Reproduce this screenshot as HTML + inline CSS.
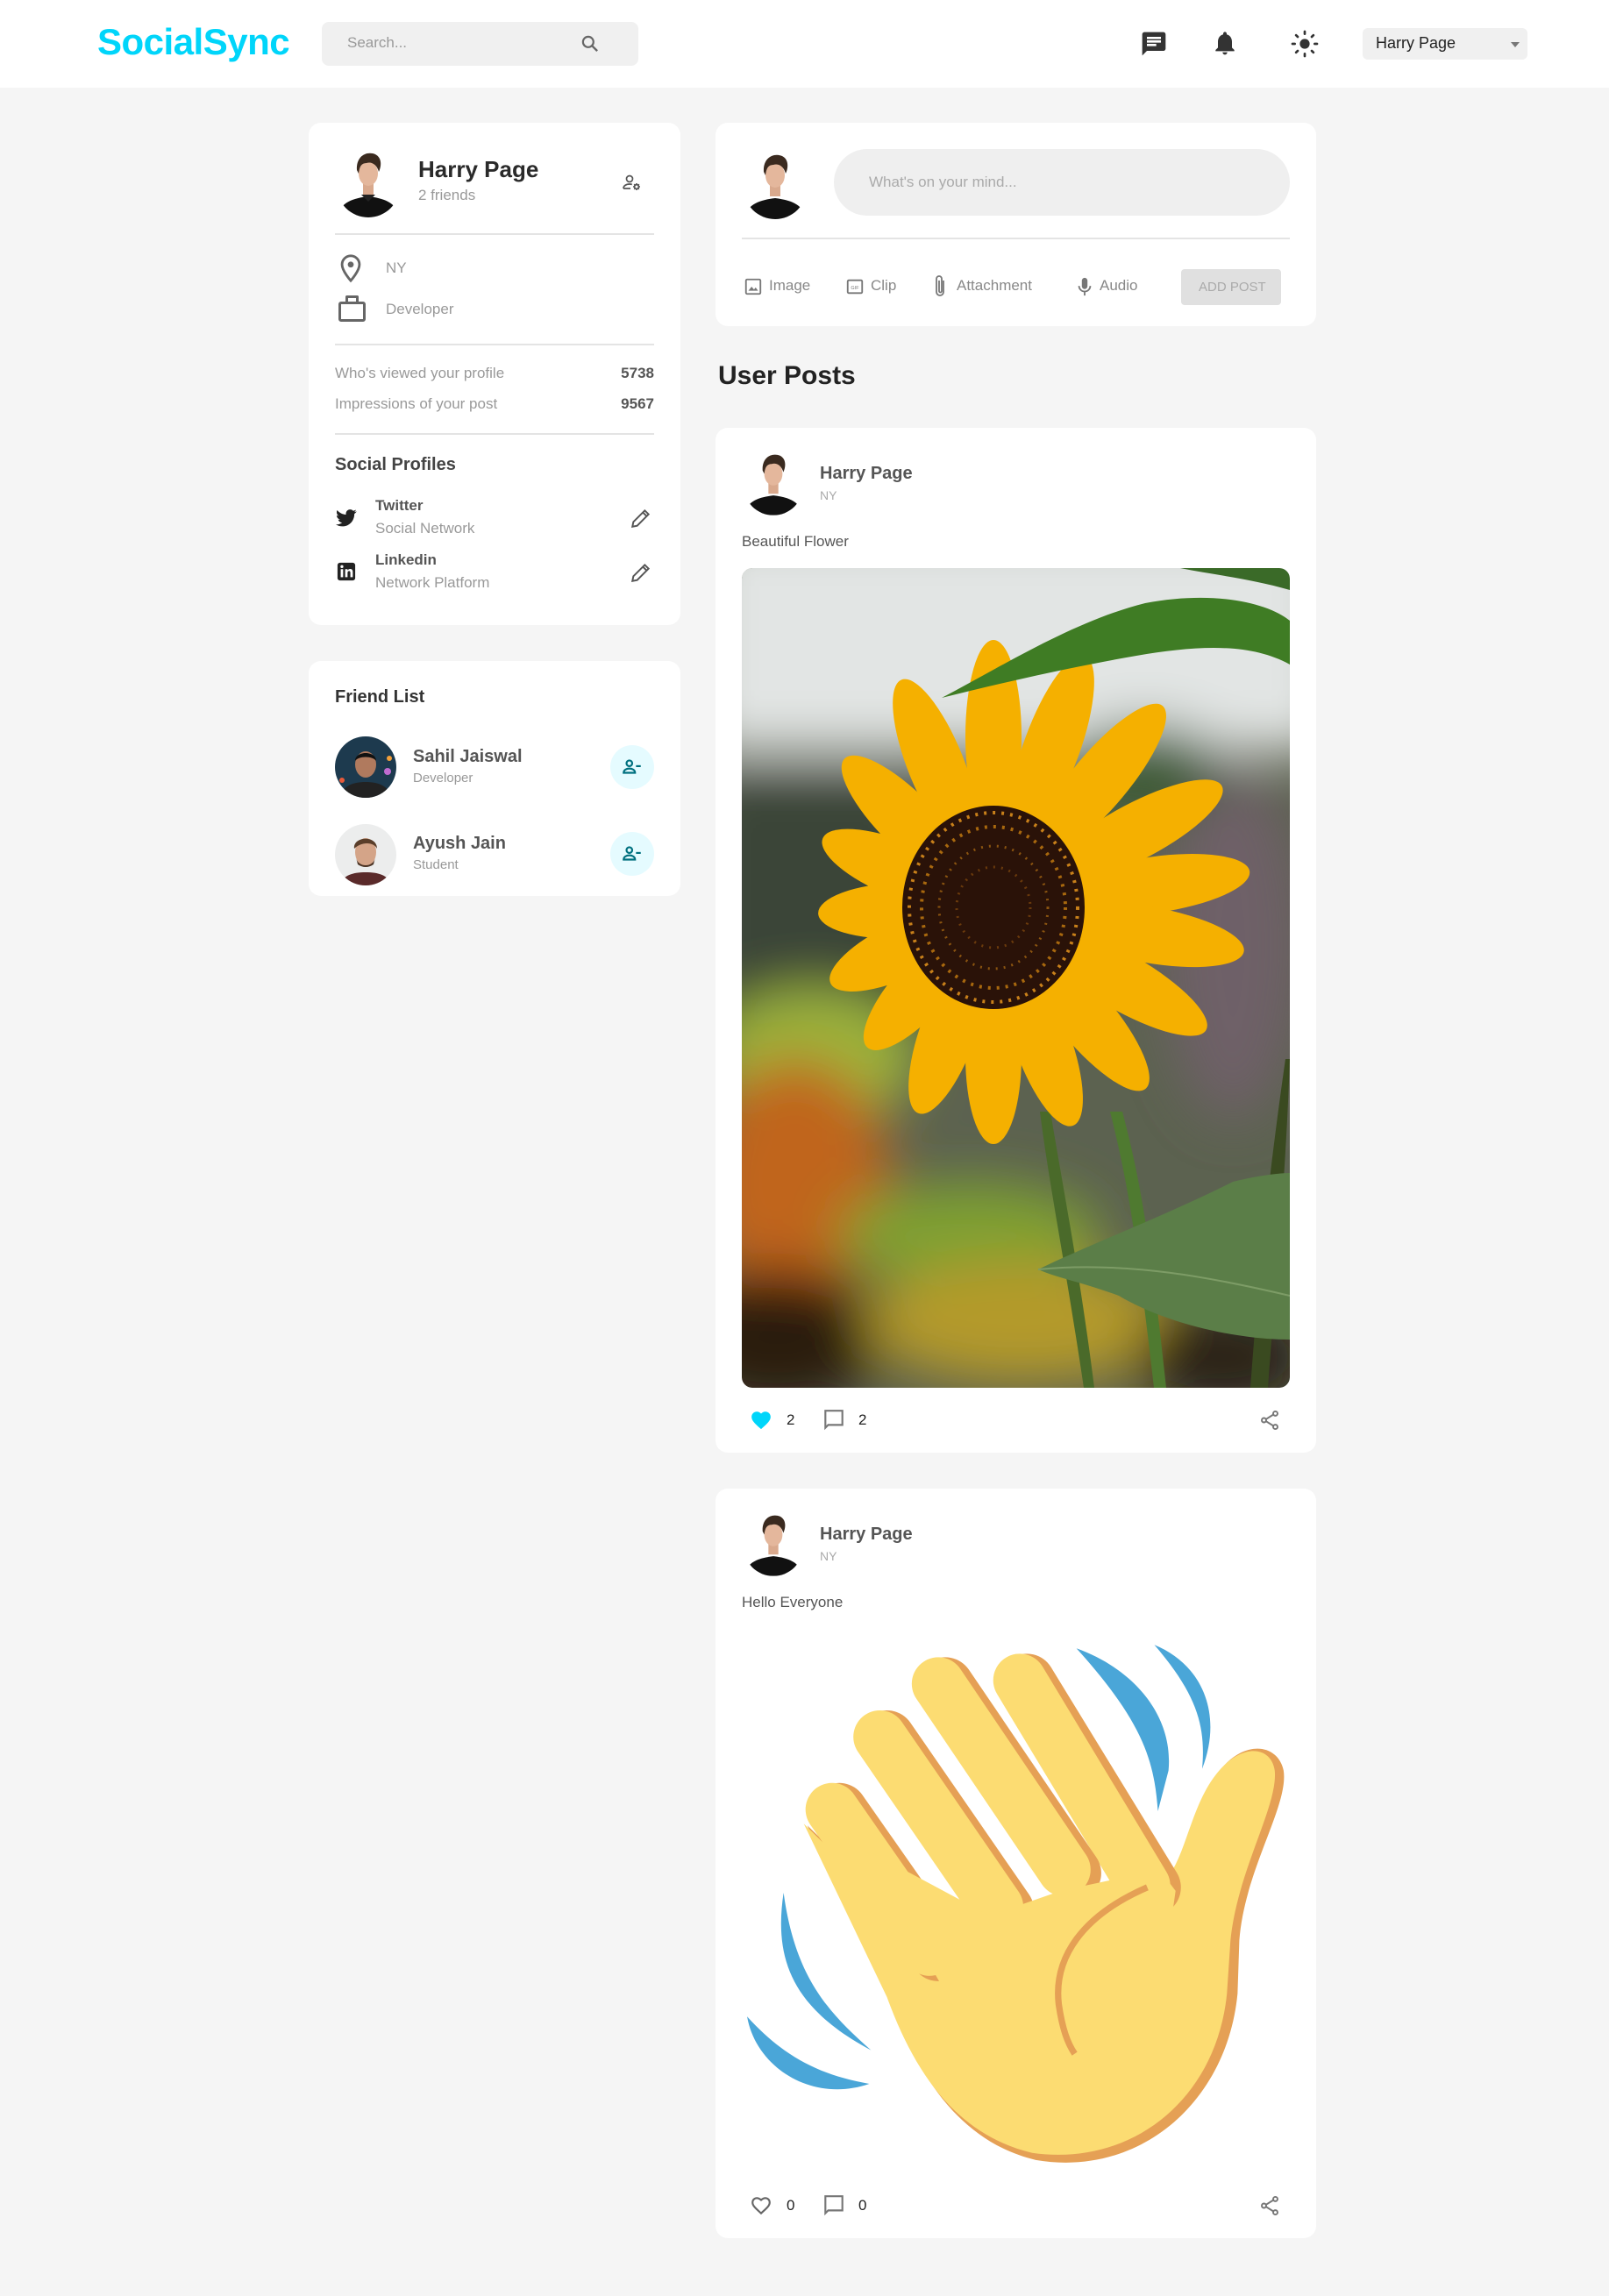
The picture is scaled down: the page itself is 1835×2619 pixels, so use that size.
<!DOCTYPE html>
<html><head><meta charset="utf-8">
<style>
*{margin:0;padding:0;box-sizing:border-box}
body{width:1835px;height:2619px;background:#f5f5f5;font-family:"Liberation Sans",sans-serif;position:relative;overflow:hidden;color:#333}
.a{position:absolute}
.card{position:absolute;background:#fff;border-radius:14px}
.t{position:absolute;white-space:nowrap}
.hr{position:absolute;height:2px;background:#e4e4e4}
</style></head><body>
<div class="a" style="left:0;top:0;width:1835px;height:100px;background:#fff"></div>
<div class="t" style="left:111px;top:24px;font-size:42px;font-weight:bold;color:#00d5fa;letter-spacing:-0.5px">SocialSync</div>
<div class="a" style="left:367px;top:25px;width:361px;height:50px;background:#f0f0f0;border-radius:8px"></div>
<div class="t" style="left:396px;top:39px;font-size:17px;color:#999">Search...</div>
<svg class="a" style="left:660px;top:37px" width="26" height="26" viewBox="0 0 24 24"><circle cx="10" cy="10" r="5.5" fill="none" stroke="#666" stroke-width="2"/><path d="M14 14l5.5 5.5" stroke="#666" stroke-width="2.2"/></svg>
<svg class="a" style="left:1300px;top:34px" width="32" height="32" viewBox="0 0 24 24"><path d="M20 2H4c-1.1 0-2 .9-2 2v18l4-4h14c1.1 0 2-.9 2-2V4c0-1.1-.9-2-2-2zM6 9h12v2H6zm8 5H6v-2h8zm4-6H6V6h12z" fill="#333"/></svg>
<svg class="a" style="left:1381px;top:33px" width="32" height="32" viewBox="0 0 24 24"><path d="M12 22c1.1 0 2-.9 2-2h-4c0 1.1.9 2 2 2zm6-6v-5c0-3.07-1.63-5.64-4.5-6.32V4c0-.83-.67-1.5-1.5-1.5s-1.5.67-1.5 1.5v.68C7.64 5.36 6 7.920 6 11v5l-2 2v1h16v-1z" fill="#333"/></svg>
<svg class="a" style="left:1472px;top:34px" width="32" height="32" viewBox="0 0 24 24"><circle cx="12" cy="12" r="4.2" fill="#333"/><g stroke="#333" stroke-width="2" stroke-linecap="round"><path d="M12 1.5v2M12 20.5v2M1.5 12h2M20.5 12h2M4.6 4.6l1.4 1.4M18 18l1.4 1.4M4.6 19.4L6 18M18 6l1.4-1.4"/></g></svg>
<div class="a" style="left:1554px;top:32px;width:188px;height:36px;background:#f0f0f0;border-radius:6px"></div>
<div class="t" style="left:1569px;top:39px;font-size:18px;color:#222">Harry Page</div>
<div class="a" style="left:1723px;top:48px;border:5px solid transparent;border-top:6px solid #777"></div>

<!-- profile card -->
<div class="card" style="left:352px;top:140px;width:424px;height:573px"></div>
<svg class="a" style="left:384px;top:168px" width="72" height="80" viewBox="0 0 72 80"><defs><clipPath id="c1"><circle cx="36" cy="44" r="36"/></clipPath></defs><g clip-path="url(#c1)"><path d="M0 80 C4 62 20 58 36 56 C52 58 68 62 72 80Z" fill="#111"/></g><rect x="30" y="40" width="12" height="14" fill="#d9a98d"/><ellipse cx="36" cy="30" rx="11" ry="14" fill="#e4b79c"/><path d="M23 26 C22 10 34 4 44 8 C52 12 51 22 48 28 C46 20 40 16 34 18 C28 18 26 22 25 30Z" fill="#3a2a1f"/><path d="M28 54 L36 62 L44 54" fill="#222"/></svg>
<div class="t" style="left:477px;top:178px;font-size:26px;font-weight:bold;color:#2a2a2a">Harry Page</div>
<div class="t" style="left:477px;top:213px;font-size:17px;color:#999">2 friends</div>
<svg class="a" style="left:709px;top:197px" width="24" height="24" viewBox="0 0 24 24"><circle cx="9" cy="7" r="3.5" fill="none" stroke="#555" stroke-width="1.7"/><path d="M2 18c0-3 3-5 7-5 1 0 2 .1 2.8.4M2 18h8" fill="none" stroke="#555" stroke-width="1.7"/><circle cx="17" cy="16" r="2.4" fill="none" stroke="#555" stroke-width="1.7"/><g stroke="#555" stroke-width="1.6"><path d="M17 12v1.3M17 18.7V20M13 16h1.3M19.7 16H21M14.2 13.2l1 1M18.8 17.8l1 1M14.2 18.8l1-1M18.8 14.2l1-1"/></g></svg>
<div class="hr" style="left:382px;top:266px;width:364px"></div>
<svg class="a" style="left:383px;top:289px" width="34" height="34" viewBox="0 0 24 24"><path d="M12 2C8.1 2 5 5.1 5 9c0 5.2 7 13 7 13s7-7.8 7-13c0-3.9-3.1-7-7-7z" fill="none" stroke="#666" stroke-width="2"/><circle cx="12" cy="9" r="2.4" fill="#666"/></svg>
<div class="t" style="left:440px;top:296px;font-size:17px;color:#999">NY</div>
<div class="a" style="left:386px;top:344px;width:31px;height:23px;border:3px solid #666;border-radius:3px"></div>
<div class="a" style="left:394px;top:337px;width:15px;height:9px;border:3px solid #666;border-bottom:none;border-radius:2px 2px 0 0"></div>
<div class="t" style="left:440px;top:343px;font-size:17px;color:#999">Developer</div>
<div class="hr" style="left:382px;top:392px;width:364px"></div>
<div class="t" style="left:382px;top:416px;font-size:17px;color:#999">Who's viewed your profile</div>
<div class="t" style="left:646px;width:100px;text-align:right;top:416px;font-size:17px;font-weight:bold;color:#555">5738</div>
<div class="t" style="left:382px;top:451px;font-size:17px;color:#999">Impressions of your post</div>
<div class="t" style="left:646px;width:100px;text-align:right;top:451px;font-size:17px;font-weight:bold;color:#555">9567</div>
<div class="hr" style="left:382px;top:494px;width:364px"></div>
<div class="t" style="left:382px;top:519px;font-size:20px;font-weight:bold;color:#444">Social Profiles</div>
<svg class="a" style="left:383px;top:580px" width="24" height="22" viewBox="0 0 24 20"><path d="M23.6 2.4c-.9.4-1.8.6-2.8.8 1-.6 1.8-1.500 2.100-2.700-.9.6-2 1-3.1 1.2C18.9.7 17.6.1 16.3.1c-2.7 0-4.8 2.2-4.8 4.8 0 .4 0 .8.1 1.1C7.5 5.8 4 3.9 1.6 1 1.2 1.7 1 2.6 1 3.4c0 1.7.9 3.2 2.2 4-.8 0-1.5-.2-2.2-.6v.1c0 2.3 1.7 4.3 3.9 4.7-.4.1-.8.2-1.3.2-.3 0-.6 0-.9-.1.6 1.9 2.4 3.3 4.5 3.4-1.7 1.3-3.7 2.1-6 2.1H0c2.1 1.4 4.7 2.2 7.4 2.2 8.9 0 13.7-7.4 13.7-13.7v-.6c1-.7 1.8-1.5 2.5-2.5z" fill="#222"/></svg>
<div class="t" style="left:428px;top:567px;font-size:17px;font-weight:bold;color:#555">Twitter</div>
<div class="t" style="left:428px;top:593px;font-size:17px;color:#999">Social Network</div>
<svg class="a" style="left:718px;top:578px" width="26" height="26" viewBox="0 0 24 24"><path d="M3 21l1-5L16 4l4 4L8 20zM14 6l4 4" fill="none" stroke="#555" stroke-width="1.8"/></svg>
<svg class="a" style="left:384px;top:641px" width="22" height="22" viewBox="0 0 24 24"><rect x="1" y="1" width="22" height="22" rx="3" fill="#222"/><rect x="5" y="9" width="3" height="10" fill="#fff"/><circle cx="6.5" cy="5.8" r="1.8" fill="#fff"/><path d="M10.5 9h3v1.5c.6-1 1.8-1.8 3.3-1.8 2.5 0 3.2 1.7 3.2 4V19h-3v-5.5c0-1.2-.3-2.2-1.6-2.2-1.4 0-1.9 1-1.9 2.3V19h-3z" fill="#fff"/></svg>
<div class="t" style="left:428px;top:629px;font-size:17px;font-weight:bold;color:#555">Linkedin</div>
<div class="t" style="left:428px;top:655px;font-size:17px;color:#999">Network Platform</div>
<svg class="a" style="left:718px;top:640px" width="26" height="26" viewBox="0 0 24 24"><path d="M3 21l1-5L16 4l4 4L8 20zM14 6l4 4" fill="none" stroke="#555" stroke-width="1.8"/></svg>

<!-- friend list -->
<div class="card" style="left:352px;top:754px;width:424px;height:268px"></div>
<div class="t" style="left:382px;top:784px;font-size:20px;font-weight:bold;color:#333">Friend List</div>
<svg class="a" style="left:382px;top:840px" width="70" height="70" viewBox="0 0 70 70"><defs><clipPath id="f1"><circle cx="35" cy="35" r="35"/></clipPath></defs><g clip-path="url(#f1)"><rect width="70" height="70" fill="#1d3a4e"/><circle cx="60" cy="40" r="4" fill="#c06bd0"/><circle cx="8" cy="50" r="3" fill="#e85a3a"/><circle cx="62" cy="25" r="3" fill="#f3a03a"/><path d="M5 70c4-14 16-18 30-18s26 4 30 18z" fill="#222"/><ellipse cx="35" cy="32" rx="12" ry="15" fill="#b07a5e"/><path d="M23 28c0-12 24-12 24 0-4-6-20-6-24 0z" fill="#111"/></g></svg>
<div class="t" style="left:471px;top:852px;font-size:20px;font-weight:bold;color:#555">Sahil Jaiswal</div>
<div class="t" style="left:471px;top:879px;font-size:15px;color:#999">Developer</div>
<div class="a" style="left:696px;top:850px;width:50px;height:50px;border-radius:50%;background:#e5fbff"></div>
<svg class="a" style="left:708px;top:862px" width="26" height="26" viewBox="0 0 24 24"><circle cx="9" cy="8" r="3" fill="none" stroke="#00707f" stroke-width="2"/><path d="M3 18c0-3 3-4.5 6-4.5s6 1.5 6 4.5z" fill="none" stroke="#00707f" stroke-width="2"/><path d="M16 11h5" stroke="#00707f" stroke-width="2"/></svg>
<svg class="a" style="left:382px;top:940px" width="70" height="70" viewBox="0 0 70 70"><defs><clipPath id="f2"><circle cx="35" cy="35" r="35"/></clipPath></defs><g clip-path="url(#f2)"><rect width="70" height="70" fill="#eceded"/><path d="M5 70c4-12 16-15 30-15s26 3 30 15z" fill="#5a2a2a"/><ellipse cx="35" cy="32" rx="12" ry="16" fill="#d4a488"/><path d="M24 38c2 12 20 12 22 0l-2 8c-6 4-12 4-18 0z" fill="#4a3324"/><path d="M22 28c-2-14 26-16 26 0-4-8-18-8-26 0z" fill="#5a3e2a"/></g></svg>
<div class="t" style="left:471px;top:951px;font-size:20px;font-weight:bold;color:#555">Ayush Jain</div>
<div class="t" style="left:471px;top:978px;font-size:15px;color:#999">Student</div>
<div class="a" style="left:696px;top:949px;width:50px;height:50px;border-radius:50%;background:#e5fbff"></div>
<svg class="a" style="left:708px;top:961px" width="26" height="26" viewBox="0 0 24 24"><circle cx="9" cy="8" r="3" fill="none" stroke="#00707f" stroke-width="2"/><path d="M3 18c0-3 3-4.5 6-4.5s6 1.5 6 4.5z" fill="none" stroke="#00707f" stroke-width="2"/><path d="M16 11h5" stroke="#00707f" stroke-width="2"/></svg>

<!-- create post -->
<div class="card" style="left:816px;top:140px;width:685px;height:232px"></div>
<svg class="a" style="left:848px;top:170px" width="72" height="80" viewBox="0 0 72 80"><defs><clipPath id="c2"><circle cx="36" cy="44" r="36"/></clipPath></defs><g clip-path="url(#c2)"><path d="M0 80 C4 62 20 58 36 56 C52 58 68 62 72 80Z" fill="#111"/></g><rect x="30" y="40" width="12" height="14" fill="#d9a98d"/><ellipse cx="36" cy="30" rx="11" ry="14" fill="#e4b79c"/><path d="M23 26 C22 10 34 4 44 8 C52 12 51 22 48 28 C46 20 40 16 34 18 C28 18 26 22 25 30Z" fill="#3a2a1f"/></svg>
<div class="a" style="left:951px;top:170px;width:520px;height:76px;background:#efefef;border-radius:38px"></div>
<div class="t" style="left:991px;top:198px;font-size:17px;color:#aaa">What's on your mind...</div>
<div class="hr" style="left:846px;top:271px;width:625px"></div>
<svg class="a" style="left:848px;top:316px" width="22" height="22" viewBox="0 0 24 24"><rect x="3" y="3" width="18" height="18" rx="1.5" fill="none" stroke="#777" stroke-width="2"/><path d="M6 17l4-5 3 3.5 2-2.5 3 4z" fill="#777"/></svg>
<div class="t" style="left:877px;top:316px;font-size:17px;color:#888">Image</div>
<svg class="a" style="left:964px;top:316px" width="22" height="22" viewBox="0 0 24 24"><rect x="3" y="4" width="18" height="16" rx="1.5" fill="none" stroke="#777" stroke-width="2"/><text x="12" y="15" font-size="6" text-anchor="middle" fill="#777" font-family="Liberation Sans">GIF</text></svg>
<div class="t" style="left:993px;top:316px;font-size:17px;color:#888">Clip</div>
<svg class="a" style="left:1062px;top:313px" width="20" height="28" viewBox="0 0 20 28"><path d="M14 7v13a4 4 0 0 1-8 0V5a3 3 0 0 1 6 0v14a1.5 1.5 0 0 1-3 0V7" fill="none" stroke="#777" stroke-width="1.8"/></svg>
<div class="t" style="left:1091px;top:316px;font-size:17px;color:#888">Attachment</div>
<svg class="a" style="left:1226px;top:314px" width="22" height="26" viewBox="0 0 24 26"><rect x="8.5" y="2" width="7" height="14" rx="3.5" fill="#777"/><path d="M5 12a7 7 0 0 0 14 0M12 19v5" fill="none" stroke="#777" stroke-width="2"/></svg>
<div class="t" style="left:1254px;top:316px;font-size:17px;color:#888">Audio</div>
<div class="a" style="left:1347px;top:307px;width:114px;height:41px;background:#e0e0e0;border-radius:4px"></div>
<div class="t" style="left:1367px;top:319px;font-size:15px;color:#aaa">ADD POST</div>

<div class="t" style="left:819px;top:412px;font-size:30px;font-weight:bold;color:#222">User Posts</div>

<!-- post 1 -->
<div class="card" style="left:816px;top:488px;width:685px;height:1169px"></div>
<svg class="a" style="left:848px;top:512px" width="68" height="76" viewBox="0 0 72 80"><defs><clipPath id="c3"><circle cx="36" cy="44" r="36"/></clipPath></defs><g clip-path="url(#c3)"><path d="M0 80 C4 62 20 58 36 56 C52 58 68 62 72 80Z" fill="#111"/></g><rect x="30" y="40" width="12" height="14" fill="#d9a98d"/><ellipse cx="36" cy="30" rx="11" ry="14" fill="#e4b79c"/><path d="M23 26 C22 10 34 4 44 8 C52 12 51 22 48 28 C46 20 40 16 34 18 C28 18 26 22 25 30Z" fill="#3a2a1f"/></svg>
<div class="t" style="left:935px;top:529px;font-size:20px;font-weight:bold;color:#555">Harry Page</div>
<div class="t" style="left:935px;top:557px;font-size:14px;color:#aaa">NY</div>
<div class="t" style="left:846px;top:608px;font-size:17px;color:#555">Beautiful Flower</div>
<svg class="a" style="left:846px;top:648px;border-radius:12px" width="625" height="935" viewBox="0 0 625 935">
<defs><filter id="bl" x="-50%" y="-50%" width="200%" height="200%"><feGaussianBlur stdDeviation="30"/></filter><clipPath id="rc"><rect width="625" height="935" rx="12"/></clipPath></defs>
<g clip-path="url(#rc)">
<rect width="625" height="935" fill="#5c6250"/>
<g filter="url(#bl)">
<rect x="-50" y="-50" width="725" height="260" fill="#e2e5e4"/>
<rect x="-50" y="230" width="260" height="300" fill="#3a4438"/>
<ellipse cx="80" cy="560" rx="120" ry="80" fill="#9cb43a"/>
<ellipse cx="60" cy="700" rx="110" ry="140" fill="#c0651a"/>
<ellipse cx="40" cy="880" rx="120" ry="80" fill="#2a1a10"/>
<ellipse cx="260" cy="760" rx="150" ry="60" fill="#7ea032"/>
<ellipse cx="320" cy="860" rx="180" ry="70" fill="#b49a2a"/>
<ellipse cx="560" cy="430" rx="80" ry="200" fill="#6e6068"/>
<ellipse cx="460" cy="230" rx="90" ry="50" fill="#3a5a30"/>
<ellipse cx="550" cy="900" rx="100" ry="60" fill="#2a2418"/>
</g>
<path d="M340 620 C350 700 370 800 390 935 L402 935 C385 800 365 700 352 620Z" fill="#4a6a2a"/>
<path d="M420 620 C440 700 450 760 470 935 L484 935 C465 760 455 700 434 620Z" fill="#4f7a30"/>
<path d="M620 560 C600 700 590 800 580 935 L600 935 C610 800 620 700 625 560Z" fill="#3a4a20"/>
<g transform="translate(287 387)">
<g fill="#f5b000">
<ellipse rx="32" ry="110" transform="rotate(0) translate(0 -195)"/>
<ellipse rx="32" ry="110" transform="rotate(20) translate(0 -195)"/>
<ellipse rx="32" ry="110" transform="rotate(40) translate(0 -190)"/>
<ellipse rx="32" ry="110" transform="rotate(62) translate(0 -185)"/>
<ellipse rx="32" ry="110" transform="rotate(82) translate(0 -185)"/>
<ellipse rx="32" ry="110" transform="rotate(100) translate(0 -180)"/>
<ellipse rx="32" ry="110" transform="rotate(120) translate(0 -170)"/>
<ellipse rx="32" ry="105" transform="rotate(140) translate(0 -165)"/>
<ellipse rx="32" ry="100" transform="rotate(160) translate(0 -165)"/>
<ellipse rx="32" ry="100" transform="rotate(180) translate(0 -170)"/>
<ellipse rx="32" ry="100" transform="rotate(200) translate(0 -150)"/>
<ellipse rx="32" ry="95" transform="rotate(222) translate(0 -120)"/>
<ellipse rx="32" ry="95" transform="rotate(245) translate(0 -110)"/>
<ellipse rx="32" ry="95" transform="rotate(268) translate(0 -105)"/>
<ellipse rx="32" ry="95" transform="rotate(292) translate(0 -115)"/>
<ellipse rx="32" ry="100" transform="rotate(315) translate(0 -140)"/>
<ellipse rx="32" ry="105" transform="rotate(338) translate(0 -175)"/>
</g>
<ellipse rx="104" ry="116" fill="#2a1208"/>
<ellipse rx="82" ry="92" fill="none" stroke="#a8680e" stroke-width="4" stroke-dasharray="3 7"/>
<ellipse rx="96" ry="108" fill="none" stroke="#c8801a" stroke-width="4" stroke-dasharray="3 7"/>
<ellipse rx="62" ry="70" fill="none" stroke="#8a5410" stroke-width="3" stroke-dasharray="2 7"/>
<ellipse rx="42" ry="46" fill="none" stroke="#6a3a0c" stroke-width="3" stroke-dasharray="2 7"/>
</g>
<path d="M228 148 C300 110 380 60 460 40 C540 25 600 40 625 60 L625 110 C580 85 520 88 450 100 C380 112 300 130 228 148Z" fill="#3f7c24"/>
<path d="M500 0 L625 0 L625 25 C580 12 540 8 500 0Z" fill="#3a6a28"/>
<path d="M338 800 C400 770 480 740 560 700 C600 690 625 690 625 690 L625 880 C560 880 480 860 430 830 C390 815 360 810 338 800Z" fill="#5b7e48"/>
<path d="M338 800 C440 790 540 810 625 830" stroke="#7d9c66" stroke-width="2" fill="none"/>
</g></svg>
<svg class="a" style="left:855px;top:1607px" width="26" height="26" viewBox="0 0 24 24"><path d="M12 21.4l-1.5-1.3C5.4 15.4 2 12.3 2 8.5 2 5.4 4.4 3 7.5 3c1.7 0 3.4.8 4.5 2.1C13.1 3.8 14.8 3 16.5 3 19.6 3 22 5.4 22 8.5c0 3.8-3.4 6.9-8.5 11.5z" fill="#00d5fa"/></svg>
<div class="t" style="left:897px;top:1610px;font-size:17px;color:#222">2</div>
<svg class="a" style="left:938px;top:1606px" width="26" height="28" viewBox="0 0 24 26"><path d="M3 3h18v15H6l-3 3z" fill="none" stroke="#777" stroke-width="2"/></svg>
<div class="t" style="left:979px;top:1610px;font-size:17px;color:#222">2</div>
<svg class="a" style="left:1435px;top:1606px" width="26" height="28" viewBox="0 0 24 24"><circle cx="18" cy="5" r="2.3" fill="none" stroke="#777" stroke-width="1.8"/><circle cx="6" cy="12" r="2.3" fill="none" stroke="#777" stroke-width="1.8"/><circle cx="18" cy="19" r="2.3" fill="none" stroke="#777" stroke-width="1.8"/><path d="M8 11l8-5M8 13l8 5" stroke="#777" stroke-width="1.8"/></svg>

<!-- post 2 -->
<div class="card" style="left:816px;top:1698px;width:685px;height:855px"></div>
<svg class="a" style="left:848px;top:1722px" width="68" height="76" viewBox="0 0 72 80"><defs><clipPath id="c4"><circle cx="36" cy="44" r="36"/></clipPath></defs><g clip-path="url(#c4)"><path d="M0 80 C4 62 20 58 36 56 C52 58 68 62 72 80Z" fill="#111"/></g><rect x="30" y="40" width="12" height="14" fill="#d9a98d"/><ellipse cx="36" cy="30" rx="11" ry="14" fill="#e4b79c"/><path d="M23 26 C22 10 34 4 44 8 C52 12 51 22 48 28 C46 20 40 16 34 18 C28 18 26 22 25 30Z" fill="#3a2a1f"/></svg>
<div class="t" style="left:935px;top:1739px;font-size:20px;font-weight:bold;color:#555">Harry Page</div>
<div class="t" style="left:935px;top:1767px;font-size:14px;color:#aaa">NY</div>
<div class="t" style="left:846px;top:1818px;font-size:17px;color:#555">Hello Everyone</div>
<svg class="a" style="left:846px;top:1850px" width="630" height="630" viewBox="0 0 1560 1560">
<g fill="#4aa6d8">
<path d="M945 75 C1100 130 1220 260 1205 420 L1175 535 C1165 400 1140 290 945 75Z"/>
<path d="M1165 65 C1300 120 1360 260 1300 415 C1310 300 1290 210 1165 65Z"/>
<path d="M118 765 C90 950 140 1090 365 1210 C240 1100 150 1000 118 765Z"/>
<path d="M15 1115 C40 1260 200 1360 360 1305 C220 1280 120 1230 15 1115Z"/>
</g>
<path d="M185 575 L420 1070 C500 1290 620 1470 830 1520 C1120 1570 1370 1360 1400 1050 L1405 900 C1420 700 1545 520 1530 420 C1515 345 1420 330 1350 420 C1270 520 1260 700 1190 740 L1140 760 L520 900 Z" fill="#e5a055"/>
<path d="M175 570 L410 1060 C490 1280 610 1450 820 1500 C1100 1540 1340 1350 1370 1050 L1380 900 C1400 700 1515 520 1505 420 C1495 350 1410 340 1340 430 C1260 530 1250 700 1180 740 L1140 760 L510 900 Z" fill="#fcdc72"/>
<g stroke-linecap="round" fill="none">
<path d="M805 170 L1160 750" stroke="#e5a055" stroke-width="160"/>
<path d="M785 165 L1135 745" stroke="#fcdc72" stroke-width="150"/>
<path d="M575 180 L935 710" stroke="#e5a055" stroke-width="160"/>
<path d="M555 175 L910 700" stroke="#fcdc72" stroke-width="150"/>
<path d="M410 330 L745 815" stroke="#e5a055" stroke-width="160"/>
<path d="M390 325 L720 805" stroke="#fcdc72" stroke-width="150"/>
<path d="M275 535 L555 935" stroke="#e5a055" stroke-width="160"/>
<path d="M255 530 L530 925" stroke="#fcdc72" stroke-width="150"/>
</g>
<path d="M290 610 L480 880 L600 1090 L1000 960 L1215 830 L1225 760 L1180 700 L900 760 L700 830 Z" fill="#fcdc72"/>
<path d="M1145 750 C960 830 880 950 895 1080 C905 1150 920 1190 940 1220" stroke="#e5a055" stroke-width="18" fill="none"/>
</svg>
<svg class="a" style="left:855px;top:2503px" width="26" height="26" viewBox="0 0 24 24"><path d="M12 20l-1.3-1.2C5.8 14.4 3 11.8 3 8.6 3 6 5 4 7.5 4c1.5 0 3 .7 4.5 2 1.5-1.3 3-2 4.5-2C19 4 21 6 21 8.6c0 3.2-2.8 5.8-7.7 10.2z" fill="none" stroke="#666" stroke-width="2"/></svg>
<div class="t" style="left:897px;top:2506px;font-size:17px;color:#222">0</div>
<svg class="a" style="left:938px;top:2502px" width="26" height="28" viewBox="0 0 24 26"><path d="M3 3h18v15H6l-3 3z" fill="none" stroke="#777" stroke-width="2"/></svg>
<div class="t" style="left:979px;top:2506px;font-size:17px;color:#222">0</div>
<svg class="a" style="left:1435px;top:2502px" width="26" height="28" viewBox="0 0 24 24"><circle cx="18" cy="5" r="2.3" fill="none" stroke="#777" stroke-width="1.8"/><circle cx="6" cy="12" r="2.3" fill="none" stroke="#777" stroke-width="1.8"/><circle cx="18" cy="19" r="2.3" fill="none" stroke="#777" stroke-width="1.8"/><path d="M8 11l8-5M8 13l8 5" stroke="#777" stroke-width="1.8"/></svg>
</body></html>
